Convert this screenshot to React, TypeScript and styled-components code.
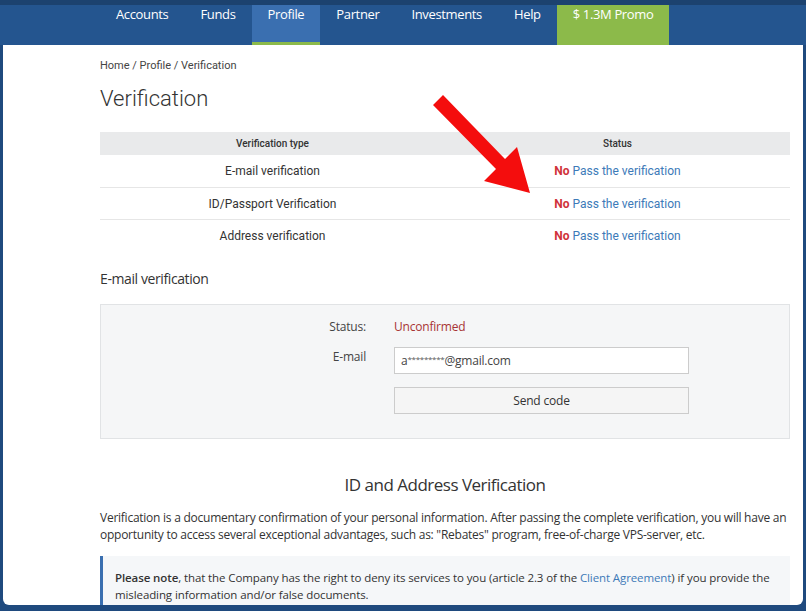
import React from 'react';
import styled, { createGlobalStyle } from 'styled-components';

const GlobalStyle = createGlobalStyle`
  body {
    margin: 0;
    background: #1f4a7e;
  }
  * {
    box-sizing: border-box;
  }
`;

interface Row {
  type: string;
}

const rows: Row[] = [
  { type: 'E-mail verification' },
  { type: 'ID/Passport Verification' },
  { type: 'Address verification' },
];

const tabs = ['Accounts', 'Funds', 'Profile', 'Partner', 'Investments', 'Help'];

const App: React.FC = () => {
  return (
    <Frame>
      <GlobalStyle />
      <Nav>
        {tabs.map((t) => (
          <Tab key={t} $active={t === 'Profile'}>
            {t}
          </Tab>
        ))}
        <PromoTab>$ 1.3M Promo</PromoTab>
      </Nav>
      <Page>
        <Breadcrumb>Home / Profile / Verification</Breadcrumb>
        <Heading>Verification</Heading>

        <Table>
          <thead>
            <tr>
              <Th>Verification type</Th>
              <Th>Status</Th>
            </tr>
          </thead>
          <tbody>
            {rows.map((r, idx) => (
              <Tr key={r.type} $last={idx === rows.length - 1}>
                <Td>{r.type}</Td>
                <Td>
                  <No>No</No> <PassLink>Pass the verification</PassLink>
                </Td>
              </Tr>
            ))}
          </tbody>
        </Table>

        <SectionTitle>E-mail verification</SectionTitle>
        <EmailBox>
          <FormGrid>
            <Label>Status:</Label>
            <Unconfirmed>Unconfirmed</Unconfirmed>
            <Label $top>E-mail</Label>
            <Field>
              a<Stars>*********</Stars>@gmail.com
            </Field>
            <span />
            <Button>Send code</Button>
          </FormGrid>
        </EmailBox>

        <CenterTitle>ID and Address Verification</CenterTitle>
        <Paragraph>
          Verification is a documentary confirmation of your personal information. After passing the
          complete verification, you will have an opportunity to access several exceptional advantages,
          such as: "Rebates" program, free-of-charge VPS-server, etc.
        </Paragraph>
        <Note>
          <b>Please note</b>, that the Company has the right to deny its services to you (article 2.3 of
          the <NoteLink>Client Agreement</NoteLink>) if you provide the misleading information and/or false
          documents.
          <br />
          The following documents are required for the verification:
        </Note>
      </Page>

      {/* красная стрелка поверх таблицы */}
      <Arrow viewBox="0 0 806 611">
        <polygon
          points="443,95 505,159 517,147 530,193 484,181 496,169 433,105"
          fill="#f40d0d"
        />
      </Arrow>
    </Frame>
  );
};

export default App;

const Frame = styled.div`
  position: relative;
  width: 806px;
  height: 611px;
  padding: 0 3px 6px 3px;
  background: #1f4a7e;
  overflow: hidden;
  display: flex;
  flex-direction: column;
`;

const Nav = styled.div`
  display: flex;
  height: 45px;
  flex-shrink: 0;
  margin: 0 -3px;
  padding-left: 100px;
  border-top: 5px solid #1c426f;
  background: #24558f;
  font-family: 'Open Sans', sans-serif;
`;

const Tab = styled.div<{ $active?: boolean }>`
  height: 40px;
  padding: 0 16px;
  font-size: 13px;
  line-height: 18px;
  letter-spacing: -0.35px;
  color: #ffffff;
  background: ${(p) => (p.$active ? '#3a6fb0' : 'transparent')};
  border-bottom: 3px solid ${(p) => (p.$active ? '#8cba4a' : 'transparent')};
`;

const PromoTab = styled(Tab)`
  background: #8cba4a;
  border-bottom-color: #8cba4a;
`;

const Page = styled.div`
  flex: 1;
  background: #ffffff;
  border-radius: 0 0 6px 6px;
  overflow: hidden;
  padding: 14px 13px 0 97px;
  color: #333333;
  font-family: Roboto, sans-serif;
`;

const Breadcrumb = styled.div`
  font-size: 11px;
  line-height: 14px;
  color: #444444;
`;

const Heading = styled.h1`
  margin: 12px 0 0;
  font-size: 22px;
  line-height: 28px;
  font-weight: 300;
  color: #333333;
`;

const Table = styled.table`
  margin-top: 19px;
  width: 100%;
  border-collapse: collapse;
  table-layout: fixed;
`;

const Th = styled.th`
  height: 23px;
  padding: 0;
  background: #e9eaeb;
  font-size: 10px;
  font-weight: 500;
  color: #333333;
`;

const Tr = styled.tr<{ $last?: boolean }>`
  border-bottom: 1px solid ${(p) => (p.$last ? 'transparent' : '#e6e6e6')};
`;

const Td = styled.td`
  height: 32px;
  padding: 1px 0 0;
  text-align: center;
  font-size: 12px;
  color: #333333;
`;

const No = styled.span`
  color: #d0323a;
  font-weight: 700;
`;

const PassLink = styled.span`
  color: #3d7ab8;
`;

const SectionTitle = styled.div`
  margin-top: 17px;
  font-family: 'Open Sans', sans-serif;
  font-size: 14px;
  line-height: 20px;
  letter-spacing: -0.4px;
  color: #333333;
`;

const EmailBox = styled.div`
  margin-top: 15px;
  height: 135px;
  padding-top: 13px;
  background: #f5f6f7;
  border: 1px solid #e1e3e5;
  font-family: 'Open Sans', sans-serif;
  font-size: 12px;
  letter-spacing: -0.2px;
`;

const FormGrid = styled.div`
  display: grid;
  grid-template-columns: 265px 295px;
  column-gap: 28px;
  row-gap: 11px;
  align-items: start;
`;

const Label = styled.div<{ $top?: boolean }>`
  text-align: right;
  line-height: 18px;
  padding-top: ${(p) => (p.$top ? '1px' : '0')};
  color: #444444;
`;

const Unconfirmed = styled.div`
  line-height: 18px;
  color: #a83434;
`;

const Field = styled.div`
  display: flex;
  align-items: center;
  width: 295px;
  height: 27px;
  padding: 0 6px;
  border: 1px solid #cccccc;
  background: #ffffff;
  font-size: 12px;
  color: #444444;
`;

const Stars = styled.span`
  font-size: 8px;
  letter-spacing: -0.3px;
  align-self: flex-start;
  margin-top: 5px;
  color: #555555;
`;

const Button = styled.div`
  margin-top: 2px;
  width: 295px;
  height: 27px;
  display: flex;
  align-items: center;
  justify-content: center;
  border: 1px solid #cccccc;
  background: #f5f5f5;
  font-size: 12px;
  color: #333333;
`;

const CenterTitle = styled.div`
  margin-top: 34px;
  text-align: center;
  font-family: 'Open Sans', sans-serif;
  font-size: 17px;
  line-height: 24px;
  letter-spacing: -0.5px;
  color: #333333;
`;

const Paragraph = styled.p`
  margin: 12px 0 0;
  font-family: 'Open Sans', sans-serif;
  font-size: 12px;
  line-height: 17px;
  letter-spacing: -0.25px;
  color: #333333;
`;

const Note = styled.div`
  margin-top: 13px;
  padding: 13px 14px 10px 12px;
  background: #f5f7f9;
  border-left: 3px solid #3a6fb0;
  font-family: 'Open Sans', sans-serif;
  font-size: 11.5px;
  line-height: 17px;
  letter-spacing: -0.1px;
  color: #333333;
  b {
    font-weight: 600;
  }
`;

const NoteLink = styled.span`
  color: #3d7ab8;
`;

const Arrow = styled.svg`
  position: absolute;
  left: 0;
  top: 0;
  width: 806px;
  height: 611px;
  pointer-events: none;
`;
